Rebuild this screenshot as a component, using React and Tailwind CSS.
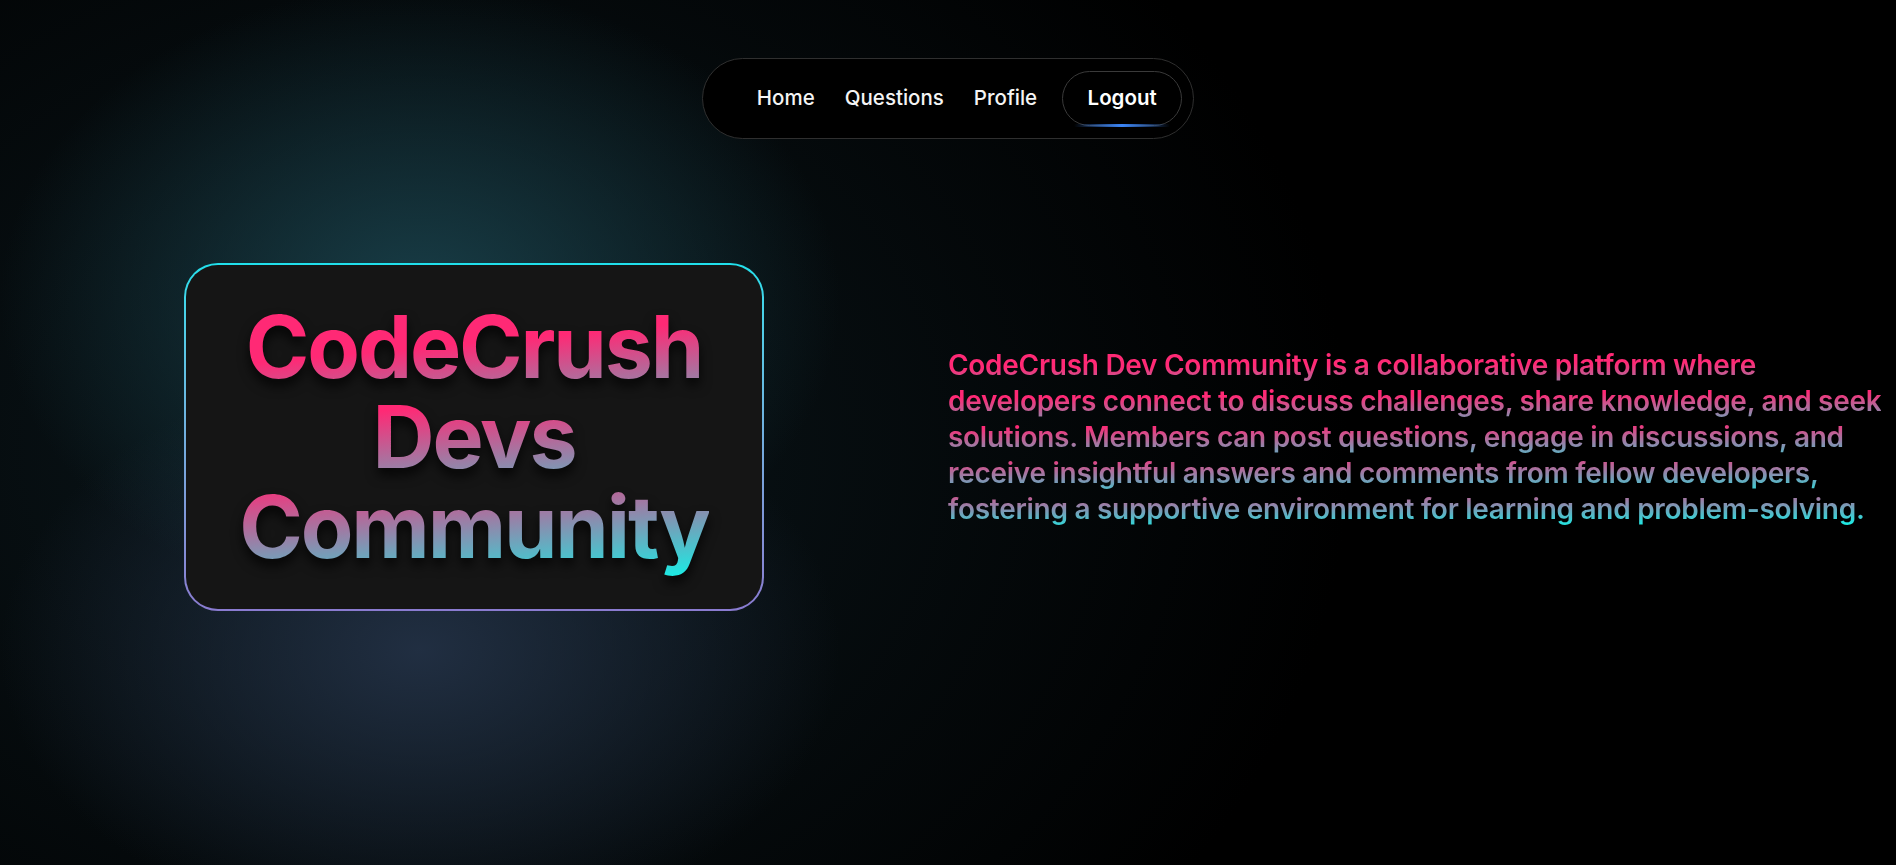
export default function App() {
  const links = ['Home', 'Questions', 'Profile']

  return (
    <div
      className="relative h-[865px] w-full overflow-hidden bg-black text-white bg-[radial-gradient(ellipse_560px_420px_at_420px_300px,rgba(25,64,74,0.95),transparent_75%),radial-gradient(ellipse_560px_380px_at_420px_650px,rgba(34,48,68,0.95),transparent_75%),radial-gradient(ellipse_950px_760px_at_400px_450px,#0b171c,#000_100%)]"
      style={{ fontFamily: 'Inter, "Noto Sans", sans-serif' }}
    >
      {/* navbar */}
      <div className="flex justify-center pt-[58px]">
        <nav className="flex items-center rounded-full border border-[#2f2f2f] bg-black py-3 pl-[39px] pr-[11px]">
          {links.map(l => (
            <a key={l} href="#" className="px-[15px] text-[20.5px] font-medium text-[#f4f4f4]">
              {l}
            </a>
          ))}
          <button className="relative ml-[10px] h-[55px] w-[120px] rounded-full border border-[#3a3a3a] bg-black text-[20.5px] font-semibold text-white">
            Logout
            <span className="absolute -bottom-[2px] left-1/2 h-[3px] w-[96px] -translate-x-1/2 rounded-full bg-gradient-to-r from-transparent via-[#3b86f8] to-transparent blur-[0.5px]" />
          </button>
        </nav>
      </div>

      {/* hero */}
      <main className="mt-[124px] grid grid-cols-2 items-center">
        <div className="justify-self-center rounded-[34px] bg-gradient-to-b from-[#1fe0ec] to-[#8a7bd0] p-[2px]">
          <div className="w-[576px] rounded-[32px] bg-[#151515] py-[37px]">
            <h1 className="text-center text-[86px] font-bold leading-[90px] tracking-tight drop-shadow-[0_7px_6px_rgba(0,0,0,0.75)]">
              <span className="bg-[linear-gradient(to_bottom_right,#ff2975_33%,#12f3e9_100%)] bg-clip-text text-transparent">
                CodeCrush Devs Community
              </span>
            </h1>
          </div>
        </div>

        <p className="text-[28px] font-semibold leading-[36px] tracking-[-0.01em]">
          <span className="bg-[linear-gradient(to_bottom_right,#ff2975_30%,#12f3e9_100%)] bg-clip-text text-transparent">
            CodeCrush Dev Community is a collaborative platform where developers connect to discuss
            challenges, share knowledge, and seek solutions. Members can post questions, engage in
            discussions, and receive insightful answers and comments from fellow developers,
            fostering a supportive environment for learning and problem-solving.
          </span>
        </p>
      </main>
    </div>
  )
}
